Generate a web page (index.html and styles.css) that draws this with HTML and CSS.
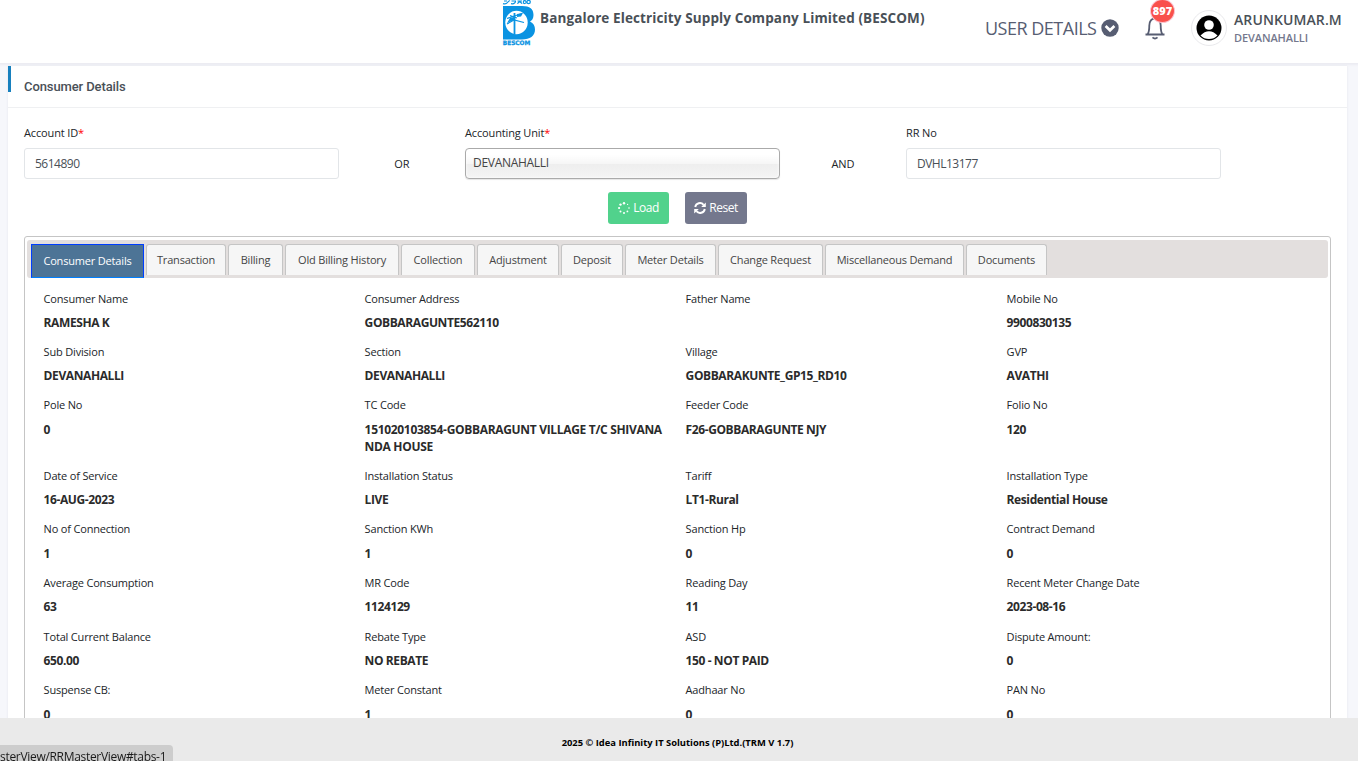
FILE: index.html
```html
<!DOCTYPE html>
<html lang="en">

<head>
    <meta charset="UTF-8">
    <meta name="viewport" content="width=device-width, initial-scale=1.0">
    <title>Consumer Details</title>
    <link rel="stylesheet" href="styles.css">
</head>

<body>
    <header class="topbar">
        <div class="brand">
            <svg class="logo" width="34" height="46" viewBox="0 0 34 46">
                <path d="M1 6H20C28 6 31.5 9 31.5 15C31.5 18.5 30 20.5 28 21.5C31.5 23 33 26 33 29.5C33 36 28 39.5 20 39.5H1Z" fill="#0a93e2"/>
                <ellipse cx="14.5" cy="22.5" rx="11.2" ry="11.7" fill="#fff"/>
                <path d="M12.5 13V34" stroke="#0a93e2" stroke-width="1.8"/>
                <path d="M5 18.5L20 13.5M5 24L12 20L22 22.5M8 15.5L15 18" stroke="#0a93e2" stroke-width="1.2" fill="none"/>
                <path d="M5 23L8 18L12 17V20ZM15 14L21 13L19 16.5L15 17Z" fill="#0a93e2"/>
                <g fill="none" stroke="#0a93e2" stroke-width="1.2">
                    <path d="M1 3.6Q4 4.6 5.5 2.5T8 .8M2 1H5M9.5 1H14M9 3.7Q13 4.3 13.5 1.5M15.5 3.7Q17.5 0 20 3.7M15.5 1H20M21.5 3.7V1Q23 0 24 1.5T22 3.7"/>
                    <circle cx="26.6" cy="2" r="1.7"/>
                </g>
                <text class="logo-text" x=".8" y="44.6" textLength="27.5" lengthAdjust="spacingAndGlyphs">BESCOM</text>
            </svg>
            <h1>Bangalore Electricity Supply Company Limited (BESCOM)</h1>
        </div>
        <div class="user-menu">
            <span>USER DETAILS</span>
            <svg width="18" height="18" viewBox="0 0 18 18">
                <circle cx="9" cy="9" r="8.7" fill="#575d72"/>
                <path d="M4.6 7L9 11.3L13.4 7" fill="none" stroke="#fff" stroke-width="2.7"/>
            </svg>
        </div>
        <div class="bell">
            <svg width="20" height="24" viewBox="0 0 20 24" fill="none" stroke="#575d72" stroke-width="1.8">
                <path d="M.5 18.5H19.5M2.5 18.5C4 16.5 4.3 14 4.3 9.5C4.3 5 6.5 2.5 10 2.5C13.5 2.5 15.7 5 15.7 9.5C15.7 14 16 16.5 17.5 18.5"/>
                <path d="M7.5 21.3Q10 23.6 12.5 21.3"/>
            </svg>
            <span class="badge">897</span>
        </div>
        <div class="profile">
            <div class="avatar">
                <svg width="26" height="26" viewBox="0 0 26 26">
                    <circle cx="13" cy="13" r="12.5" fill="#000"/>
                    <circle cx="13" cy="10" r="4.8" fill="#fff"/>
                    <path d="M4.5 20.5Q8.5 16.2 13 16.2T21.5 20.5Q18 24 13 24T4.5 20.5Z" fill="#fff"/>
                </svg>
            </div>
            <div class="who">
                <strong>ARUNKUMAR.M</strong>
                <span>DEVANAHALLI</span>
            </div>
        </div>
    </header>

    <main class="card">
        <div class="card-header">
            <h2>Consumer Details</h2>
        </div>

        <form class="search">
            <div class="field">
                <label for="account">Account ID<i>*</i></label>
                <input id="account" type="text" value="5614890">
            </div>
            <span class="joiner">OR</span>
            <div class="field">
                <label>Accounting Unit<i>*</i></label>
                <div class="select"><span>DEVANAHALLI</span></div>
            </div>
            <span class="joiner">AND</span>
            <div class="field">
                <label for="rrno">RR No</label>
                <input id="rrno" type="text" value="DVHL13177">
            </div>
        </form>

        <div class="actions">
            <button class="btn btn-load" type="button">
                <svg width="12" height="12" viewBox="0 0 12 12" fill="#fff">
                    <circle cx="6" cy="1.2" r="1.2"/>
                    <circle cx="9.6" cy="2.4" r=".6"/>
                    <circle cx="11" cy="6" r=".8"/>
                    <circle cx="9.4" cy="9.4" r=".9"/>
                    <circle cx="6" cy="10.9" r="1"/>
                    <circle cx="2.5" cy="9.4" r="1"/>
                    <circle cx="1.1" cy="6" r="1.1"/>
                    <circle cx="2.5" cy="2.6" r="1.2"/>
                </svg>
                <span>Load</span>
            </button>
            <button class="btn btn-reset" type="button">
                <svg width="12" height="12" viewBox="0 0 12 12">
                    <path d="M1.2 5A4.8 4.8 0 0 1 9.6 2.8M10.8 7A4.8 4.8 0 0 1 2.4 9.2" fill="none" stroke="#fff" stroke-width="1.9"/>
                    <path d="M11.8 .4V5H7.2ZM.2 11.6V7H4.8Z" fill="#fff"/>
                </svg>
                <span>Reset</span>
            </button>
        </div>

        <section class="tabs">
            <nav class="tab-nav">
                <a class="active w-113">Consumer Details</a>
                <a class="w-80">Transaction</a>
                <a class="w-55">Billing</a>
                <a class="w-114">Old Billing History</a>
                <a class="w-74">Collection</a>
                <a class="w-82">Adjustment</a>
                <a class="w-62">Deposit</a>
                <a class="w-91">Meter Details</a>
                <a class="w-105">Change Request</a>
                <a class="w-139">Miscellaneous Demand</a>
                <a class="w-81">Documents</a>
            </nav>

            <dl class="details">
                <div><dt>Consumer Name</dt><dd>RAMESHA K</dd></div>
                <div><dt>Consumer Address</dt><dd>GOBBARAGUNTE562110</dd></div>
                <div><dt>Father Name</dt><dd></dd></div>
                <div><dt>Mobile No</dt><dd>9900830135</dd></div>

                <div><dt>Sub Division</dt><dd>DEVANAHALLI</dd></div>
                <div><dt>Section</dt><dd>DEVANAHALLI</dd></div>
                <div><dt>Village</dt><dd>GOBBARAKUNTE_GP15_RD10</dd></div>
                <div><dt>GVP</dt><dd>AVATHI</dd></div>

                <div><dt>Pole No</dt><dd>0</dd></div>
                <div><dt>TC Code</dt><dd class="long">151020103854-GOBBARAGUNT VILLAGE T/C SHIVANA<br>NDA HOUSE</dd></div>
                <div><dt>Feeder Code</dt><dd>F26-GOBBARAGUNTE NJY</dd></div>
                <div><dt>Folio No</dt><dd>120</dd></div>

                <div><dt>Date of Service</dt><dd>16-AUG-2023</dd></div>
                <div><dt>Installation Status</dt><dd>LIVE</dd></div>
                <div><dt>Tariff</dt><dd>LT1-Rural</dd></div>
                <div><dt>Installation Type</dt><dd>Residential House</dd></div>

                <div><dt>No of Connection</dt><dd>1</dd></div>
                <div><dt>Sanction KWh</dt><dd>1</dd></div>
                <div><dt>Sanction Hp</dt><dd>0</dd></div>
                <div><dt>Contract Demand</dt><dd>0</dd></div>

                <div><dt>Average Consumption</dt><dd>63</dd></div>
                <div><dt>MR Code</dt><dd>1124129</dd></div>
                <div><dt>Reading Day</dt><dd>11</dd></div>
                <div><dt>Recent Meter Change Date</dt><dd>2023-08-16</dd></div>

                <div><dt>Total Current Balance</dt><dd>650.00</dd></div>
                <div><dt>Rebate Type</dt><dd>NO REBATE</dd></div>
                <div><dt>ASD</dt><dd>150 - NOT PAID</dd></div>
                <div><dt>Dispute Amount:</dt><dd>0</dd></div>

                <div><dt>Suspense CB:</dt><dd>0</dd></div>
                <div><dt>Meter Constant</dt><dd>1</dd></div>
                <div><dt>Aadhaar No</dt><dd>0</dd></div>
                <div><dt>PAN No</dt><dd>0</dd></div>
            </dl>
        </section>
    </main>

    <footer class="footer">2025 © Idea Infinity IT Solutions (P)Ltd.(TRM V 1.7)</footer>
    <div class="status-link">sterView/RRMasterView#tabs-1</div>
</body>

</html>
```
FILE: styles.css
```css
* {
    box-sizing: border-box;
}

body {
    margin: 0;
    height: 761px;
    overflow: hidden;
    background-color: #f6f7fb;
    color: #212529;
    font-family: "Open Sans", "Noto Sans", sans-serif;
    font-size: 11px;
}

/* Top bar */
.topbar {
    display: flex;
    height: 63px;
    padding-left: 502px;
    background-color: #ffffff;
    box-shadow: 0 1px 2px 1px #ebebf2;
    position: relative;
}

.brand {
    display: flex;
    width: 483px;
}

.logo {
    flex: none;
}

.logo-text {
    font: 900 6px "DejaVu Sans", sans-serif;
    fill: #0a93e2;
    stroke: #0a93e2;
    stroke-width: 0.3px;
}

.brand h1 {
    margin: 8px 0 0 4px;
    color: #495057;
    font-size: 13.5px;
    line-height: 20px;
    font-weight: 700;
    letter-spacing: 0.11px;
    white-space: nowrap;
}

.user-menu {
    display: flex;
    align-items: center;
    justify-content: space-between;
    width: 134px;
    height: 56px;
    color: #575d72;
    font-size: 18px;
    font-weight: 400;
    letter-spacing: -0.5px;
    white-space: nowrap;
}

.bell {
    position: relative;
    width: 20px;
    margin: 16px 0 0 26px;
}

.badge {
    position: absolute;
    top: -17px;
    left: 5px;
    width: 25px;
    height: 24px;
    border: 1px solid #fbc6d2;
    border-radius: 50%;
    background-color: #f9504c;
    color: #ffffff;
    font-size: 11px;
    font-weight: 800;
    line-height: 22px;
    text-align: center;
}

.profile {
    display: flex;
    margin-left: 26px;
}

.avatar {
    width: 36px;
    height: 36px;
    margin-top: 10px;
    padding: 4px;
    border: 1px solid #e9e9ec;
    border-radius: 50%;
}

.who {
    margin: 10px 0 0 7px;
    white-space: nowrap;
}

.who strong,
.who span {
    display: block;
}

.who strong {
    color: #495057;
    font-size: 14px;
    font-weight: 600;
    line-height: 20px;
    letter-spacing: 0.1px;
}

.who span {
    color: #74788d;
    font-size: 11px;
    font-weight: 600;
    line-height: 16px;
    letter-spacing: -0.1px;
}

/* Card */
.card {
    width: 1339px;
    height: 700px;
    margin: 3px 0 0 8px;
    background-color: #ffffff;
    box-shadow: 0 0 2px #e4e5ec;
    position: relative;
}

.card-header {
    height: 42px;
    padding-left: 16px;
    border-bottom: 1px solid #eff0f2;
    background: linear-gradient(#1780be, #1780be) no-repeat 0 0 / 3px 26px;
}

.card-header h2 {
    margin: 0;
    color: #495057;
    font-family: Roboto, sans-serif;
    font-size: 13px;
    font-weight: 500;
    line-height: 41px;
    letter-spacing: -0.1px;
}

.search {
    display: flex;
    padding: 17px 0 0 16px;
    height: 84px;
}

.field {
    width: 315px;
}

.field label {
    display: block;
    height: 23px;
    line-height: 16px;
    letter-spacing: -0.14px;
}

.field i {
    color: #ff0000;
    font-style: normal;
}

.field input {
    display: block;
    width: 315px;
    height: 31px;
    padding: 0 10px;
    border: 1px solid #e2e5e8;
    border-radius: 3px;
    color: #495057;
    font: inherit;
    font-size: 12px;
    letter-spacing: -0.5px;
}

.select {
    height: 31px;
    padding: 0 7px;
    border: 1px solid #aaaaaa;
    border-radius: 4px;
    background: linear-gradient(#ffffff 20%, #f6f6f6 50%, #eeeeee 52%, #f4f4f4 100%);
    box-shadow: inset 0 0 3px #ffffff, 0 1px 1px rgba(0, 0, 0, 0.1);
    color: #444444;
    font-size: 12px;
    line-height: 27px;
    letter-spacing: -0.3px;
}

.joiner {
    width: 126px;
    padding-top: 31px;
    line-height: 16px;
    text-align: center;
}

.actions {
    display: flex;
    gap: 16px;
    padding-left: 600px;
}

.btn {
    display: flex;
    align-items: center;
    justify-content: center;
    gap: 3px;
    width: 61px;
    height: 32px;
    padding: 0;
    border: 0;
    border-radius: 3px;
    color: #ffffff;
    font: 12px/30px "Open Sans", sans-serif;
    letter-spacing: -0.5px;
}

.btn-load {
    background-color: #51d28c;
}

.btn-reset {
    width: 62px;
    background-color: #74788d;
}

/* Tabs */
.tabs {
    width: 1307px;
    height: 560px;
    margin: 12px 0 0 16px;
    padding: 3px 2px;
    border: 1px solid #c5c5c5;
    border-radius: 3px;
}

.tab-nav {
    display: flex;
    gap: 2px;
    height: 38px;
    padding: 4px 0 0 4px;
    border-radius: 3px;
    background-color: #e3dfde;
}

.tab-nav a {
    height: 31px;
    border: 1px solid #c5c5c5;
    border-bottom: 0;
    border-radius: 3px 3px 0 0;
    background-color: #f6f6f6;
    color: #454545;
    line-height: 29px;
    letter-spacing: -0.18px;
    text-align: center;
    white-space: nowrap;
}

.tab-nav .active {
    height: 34px;
    border: 1px solid #003eff;
    border-bottom-color: #007fff;
    border-radius: 0;
    background-color: #4d7496;
    color: #ffffff;
    line-height: 32px;
}

.w-55 { width: 55px; }
.w-62 { width: 62px; }
.w-74 { width: 74px; }
.w-80 { width: 80px; }
.w-81 { width: 81px; }
.w-82 { width: 82px; }
.w-91 { width: 91px; }
.w-105 { width: 105px; }
.w-113 { width: 113px; }
.w-114 { width: 114px; }
.w-139 { width: 139px; }

/* Details grid */
.details {
    display: grid;
    grid-template-columns: repeat(4, 321px);
    margin: 0;
    padding: 12.6px 0 0 16.6px;
}

.details div {
    min-height: 53.4px;
    padding-bottom: 13px;
}

.details div:nth-child(n+13) {
    min-height: 53.6px;
}

.details dt {
    height: 23.4px;
    line-height: 16px;
    letter-spacing: -0.18px;
}

.details dd {
    margin: 0;
    color: #2b2b2b;
    font-size: 12px;
    font-weight: 700;
    line-height: 17px;
    letter-spacing: -0.4px;
    white-space: nowrap;
}

.details .long {
    letter-spacing: -0.32px;
}

/* Footer */
.footer {
    position: fixed;
    left: 0;
    right: 0;
    bottom: 0;
    height: 43px;
    padding-right: 3px;
    background-color: #eaeaea;
    color: #000000;
    font-size: 9.4px;
    font-weight: 700;
    line-height: 49px;
    text-align: center;
}

.status-link {
    position: fixed;
    left: 0;
    bottom: 0;
    width: 173px;
    height: 16px;
    border-radius: 0 4px 0 0;
    background-color: #cdcdcd;
    color: #1a1a1a;
    font-size: 12px;
    line-height: 23px;
    letter-spacing: -0.31px;
    white-space: nowrap;
}
```
